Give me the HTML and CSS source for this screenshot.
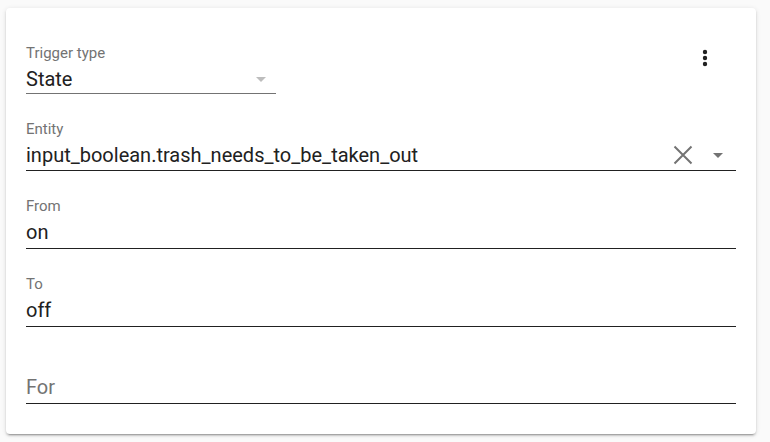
FILE: index.html
```html
<!DOCTYPE html>
<html>
<head>
<meta charset="utf-8">
<link rel="stylesheet" href="styles.css">
</head>
<body>
<div class="card">
  <div class="top-row">
    <div class="field trigger">
      <div class="label">Trigger type</div>
      <div class="value-row">
        <span class="value">State</span>
        <svg class="arrow light" viewBox="0 0 24 24" width="24" height="24"><path d="M7 10l5 5 5-5z"/></svg>
      </div>
    </div>
    <svg class="menu" viewBox="0 0 24 24" width="24" height="24"><path d="M12 15.8a2.2 2.2 0 1 1 0 4.4a2.2 2.2 0 1 1 0-4.4zm0-6a2.2 2.2 0 1 1 0 4.4a2.2 2.2 0 1 1 0-4.4zm0-6a2.2 2.2 0 1 1 0 4.4a2.2 2.2 0 1 1 0-4.4z"/></svg>
  </div>
  <div class="field entity">
    <div class="label">Entity</div>
    <div class="value-row">
      <span class="value">input_boolean.trash_needs_to_be_taken_out</span>
      <svg class="clear" viewBox="0 0 24 24" width="24" height="24"><path d="M3.5 3.5L20.5 20.5M20.5 3.5L3.5 20.5"/></svg>
      <svg class="arrow" viewBox="0 0 24 24" width="24" height="24"><path d="M7 10l5 5 5-5z"/></svg>
    </div>
  </div>
  <div class="field">
    <div class="label">From</div>
    <div class="value-row"><span class="value">on</span></div>
  </div>
  <div class="field">
    <div class="label">To</div>
    <div class="value-row"><span class="value">off</span></div>
  </div>
  <div class="field empty">
    <div class="value-row"><span class="value placeholder">For</span></div>
  </div>
</div>
</body>
</html>
```

FILE: styles.css
```css
html, body {
  margin: 0;
  padding: 0;
}
body {
  background: #fafafa;
  font-family: Roboto, "Liberation Sans", sans-serif;
  padding: 8px 14px 8px 6px;
  width: 770px;
  height: 442px;
  box-sizing: border-box;
}
.card {
  width: 750px;
  height: 426px;
  box-sizing: border-box;
  background: #fff;
  border-radius: 4px;
  box-shadow: 0 2px 2px 0 rgba(0,0,0,0.14), 0 1px 5px 0 rgba(0,0,0,0.12), 0 3px 1px -2px rgba(0,0,0,0.2);
  padding: 36px 20px 0 20px;
  display: flex;
  flex-direction: column;
  gap: 26px;
}
.top-row {
  display: flex;
  justify-content: space-between;
  align-items: flex-start;
}
.menu {
  fill: #212121;
  margin-top: 2px;
  margin-right: 19px;
}
.field {
  display: flex;
  flex-direction: column;
  border-bottom: 1px solid #212121;
}
.field.trigger {
  width: 250px;
  border-bottom-color: #737373;
}
.label {
  font-size: 15px;
  line-height: 18px;
  color: #737373;
  margin-bottom: 4px;
}
.value-row {
  display: flex;
  align-items: center;
  height: 24px;
  padding-top: 1px;
  padding-bottom: 4px;
}
.trigger .value-row {
  padding-bottom: 2px;
}
.entity .value-row {
  padding-bottom: 3px;
}
.value {
  flex: 1;
  font-size: 20px;
  line-height: 24px;
  color: #212121;
  white-space: nowrap;
}
.placeholder {
  color: #737373;
}
.field.empty {
  margin-top: 21px;
}
.arrow {
  fill: #737373;
  flex: none;
}
.arrow.light {
  fill: #bdbdbd;
  margin-right: 3px;
}
.clear {
  stroke: #737373;
  stroke-width: 2;
  fill: none;
  flex: none;
  margin-right: 11px;
}
.entity .arrow {
  margin-right: 6px;
}
```
